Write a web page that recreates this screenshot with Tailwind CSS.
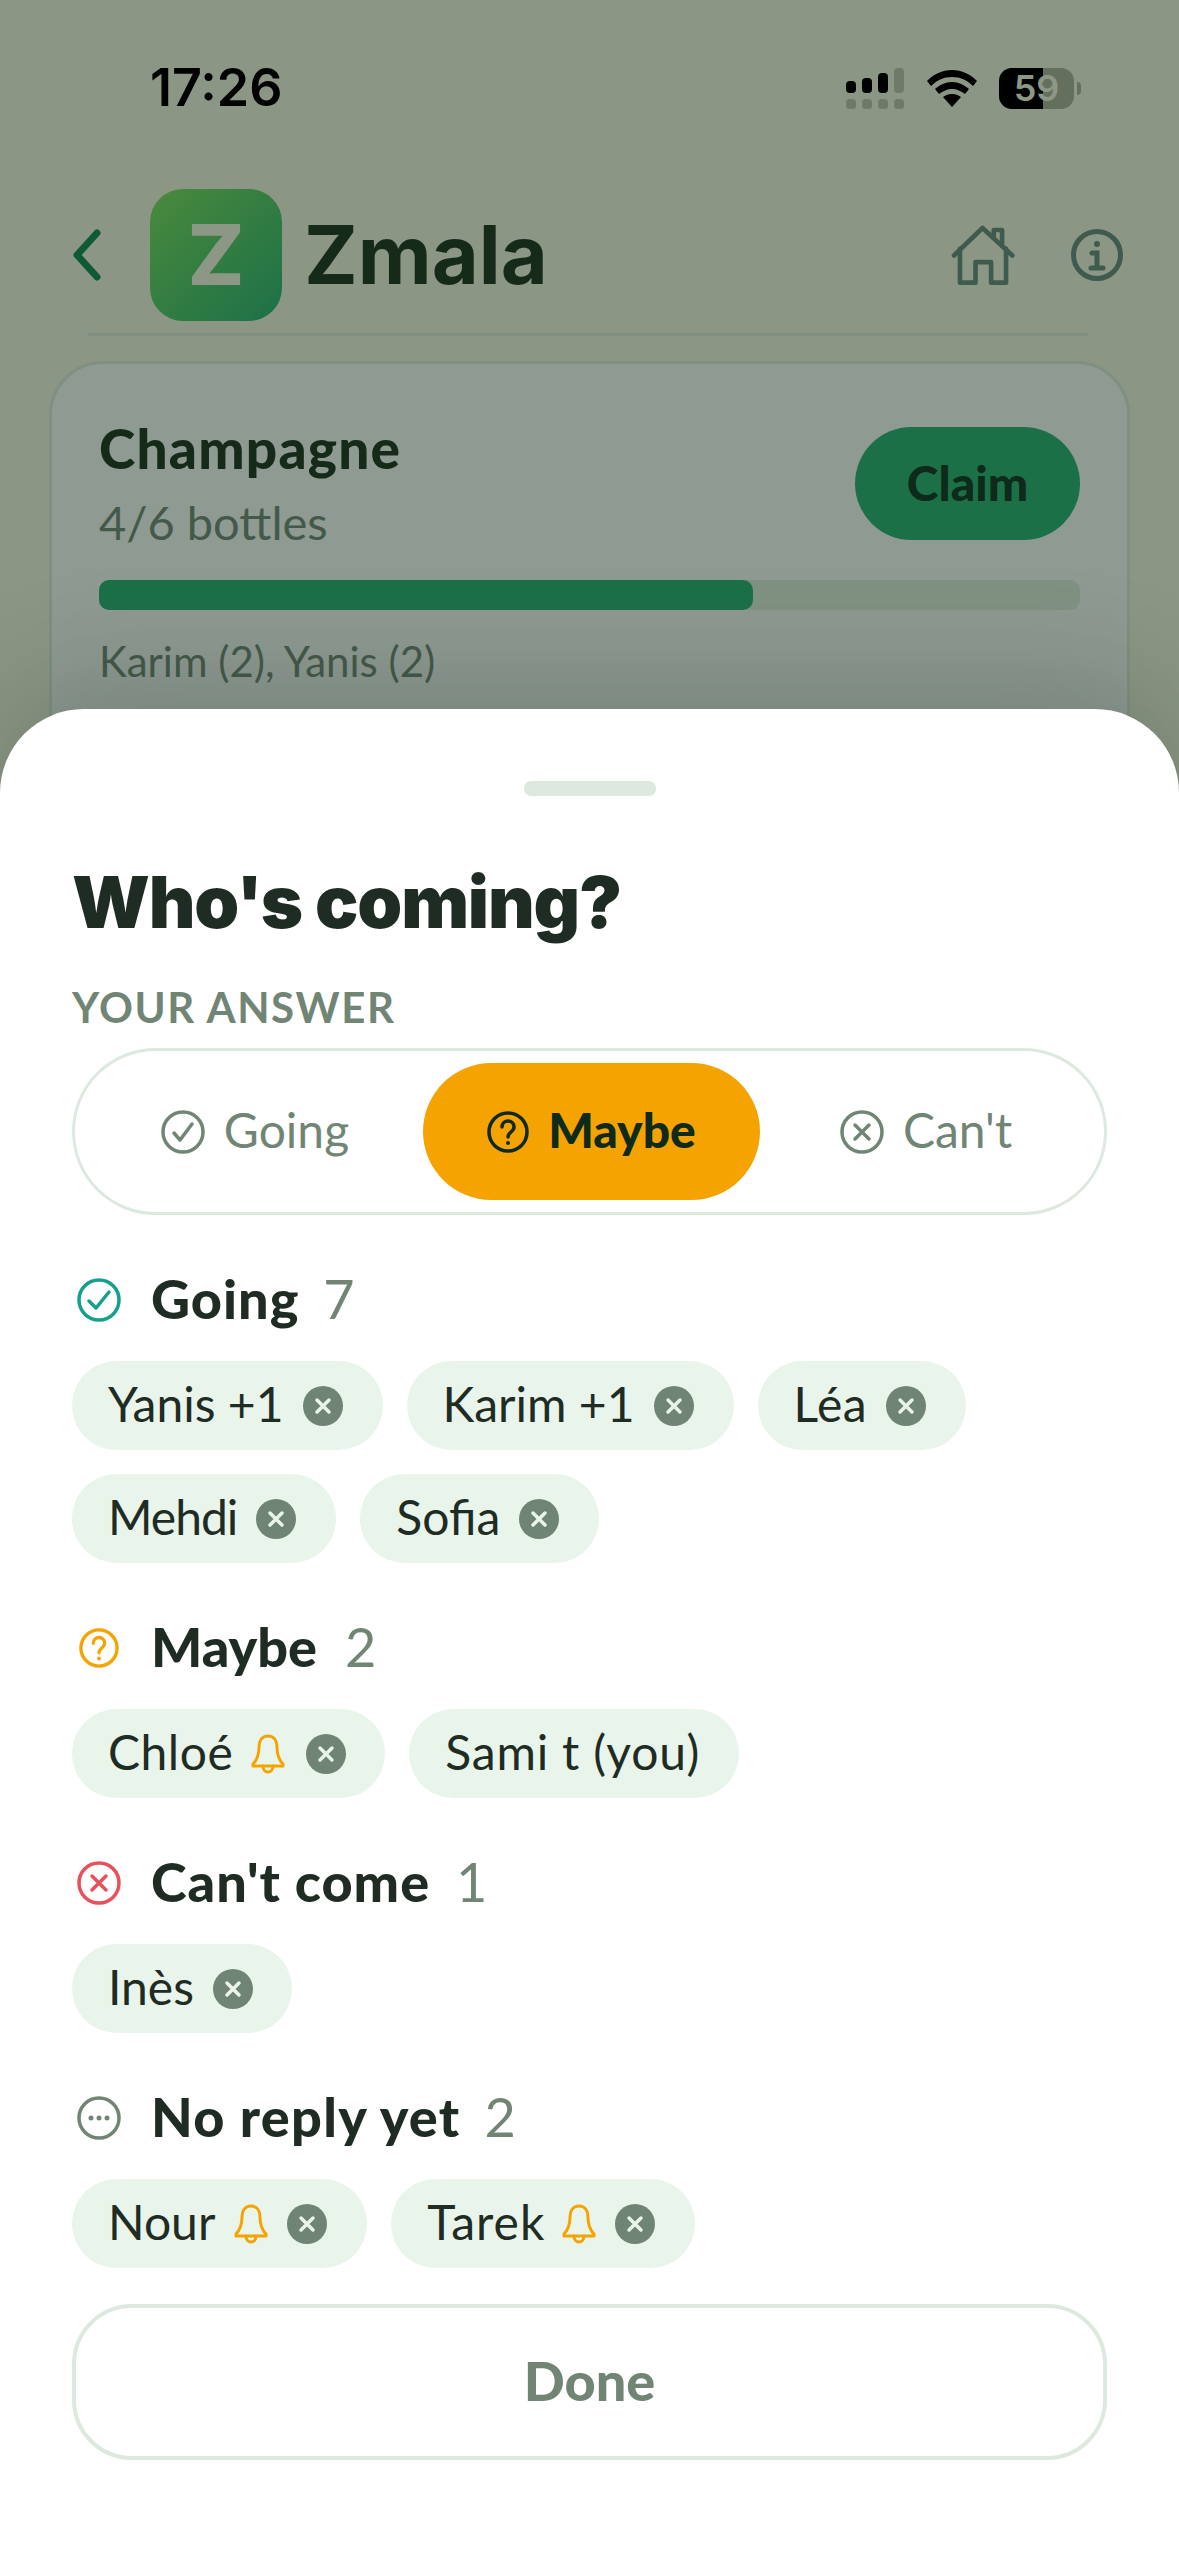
<!DOCTYPE html>
<html lang="en">
<head>
    <meta charset="UTF-8">
    <meta name="viewport" content="width=device-width, initial-scale=1.0">
    <title>Zmala</title>
    <script src="https://cdn.jsdelivr.net/npm/@tailwindcss/browser@4"></script>
</head>
<body class="bg-[#8c9684] font-['Lato',sans-serif]">
    <svg class="hidden">
        <symbol id="x-dot" viewBox="0 0 40 40">
            <circle cx="20" cy="20" r="20" fill="#708476"/>
            <path d="M14 14l12 12M26 14L14 26" stroke="#e9f4eb" stroke-width="3.5" stroke-linecap="round"/>
        </symbol>
        <symbol id="bell" viewBox="0 0 34 40" fill="none" stroke="#f5a300" stroke-width="3" stroke-linecap="round" stroke-linejoin="round">
            <path d="M17 2c-6 0-9 5-9 11 0 7-1 12-6 17v2h30v-2c-5-5-6-10-6-17 0-6-3-11-9-11z"/>
            <path d="M12 32c0 8 10 8 10 0"/>
        </symbol>
    </svg>

    <div class="relative w-[1179px] h-[2556px] overflow-hidden">
        <!-- status bar -->
        <div class="flex items-center h-[176px] pt-[64px] pb-[64px] pl-[150px]">
            <span class="font-['Inter',sans-serif] font-semibold text-[52px] leading-[48px] text-black">17:26</span>
            <div class="ml-auto flex items-center">
                <svg width="58" height="41" viewBox="0 0 58 41">
                    <rect x="0" y="13" width="10" height="12" rx="4" fill="#000"/>
                    <rect x="16" y="10" width="10" height="15" rx="4" fill="#000"/>
                    <rect x="32" y="5" width="10" height="20" rx="4" fill="#000"/>
                    <rect x="48" y="0" width="10" height="25" rx="4" fill="#6f7a68"/>
                    <rect x="0" y="31" width="10" height="10" rx="3.5" fill="#6f7a68"/>
                    <rect x="16" y="31" width="10" height="10" rx="3.5" fill="#6f7a68"/>
                    <rect x="32" y="31" width="10" height="10" rx="3.5" fill="#6f7a68"/>
                    <rect x="48" y="31" width="10" height="10" rx="3.5" fill="#6f7a68"/>
                </svg>
                <svg class="ml-[23px]" width="50" height="37" viewBox="0 0 50 37">
                    <path d="M25 0C15 0 7 4 0 11l4 5c6-6 13-9 21-9s15 3 21 9l4-5C43 4 35 0 25 0z" fill="#000"/>
                    <path d="M25 12c-7 0-12 3-17 7l4 5c4-3 8-5 13-5s9 2 13 5l4-5c-5-4-10-7-17-7z" fill="#000"/>
                    <path d="M25 24c-4 0-6 1-9 3l9 10 9-10c-3-2-5-3-9-3z" fill="#000"/>
                </svg>
                <div class="ml-[22px] relative w-[75px] h-[41px] rounded-[13px] overflow-hidden bg-[#646f5e]">
                    <div class="w-[44px] h-full bg-black"></div>
                    <span class="absolute inset-0 flex items-center justify-center font-['Inter',sans-serif] font-semibold text-[36px] leading-none text-[#8d9785]">59</span>
                </div>
                <div class="ml-[3px] mr-[98px] w-[4px] h-[13px] rounded-r-full bg-[#646f5e]"></div>
            </div>
        </div>

        <!-- app header -->
        <div class="flex items-center h-[132px] mt-[13px]">
            <svg class="ml-[73px]" width="28" height="52" viewBox="0 0 28 52" fill="none" stroke="#0f5a34" stroke-width="7" stroke-linecap="round" stroke-linejoin="round">
                <path d="M24 4L4 26l20 22"/>
            </svg>
            <div class="ml-[49px] flex items-center justify-center w-[132px] h-[132px] rounded-[33px] bg-[linear-gradient(135deg,#4a8a3c,#1c7048)] font-['Inter',sans-serif] font-extrabold text-[84px] leading-none text-[#8d9785]">Z</div>
            <span class="ml-[22px] font-['Inter',sans-serif] font-bold text-[81px] leading-none text-[#162a1a]">Zmala</span>
            <svg class="ml-auto" width="68" height="63" viewBox="450 550 205 190" fill="none" stroke="#3f5b4f" stroke-width="14" stroke-linecap="round" stroke-linejoin="round">
                <path d="M465 645l86-83 90 83"/>
                <path d="M483 625v102h47v-62h47v62h45V625"/>
                <path d="M585 590v-22h25v42"/>
            </svg>
            <svg class="ml-[54px] mr-[56px]" width="52" height="52" viewBox="0 0 52 52" fill="none" stroke="#3f5b4f" stroke-width="5" stroke-linecap="round">
                <circle cx="26" cy="26" r="23.5"/>
                <circle cx="26" cy="15" r="3" fill="#3f5b4f" stroke="none"/>
                <path d="M21 24h5v15M20 39h12"/>
            </svg>
        </div>
        <div class="h-[3px] mt-[12px] ml-[88px] mr-[90px] rounded-b-full bg-[#7e8f80]"></div>

        <!-- card behind the sheet -->
        <div class="mt-[25px] mx-[49px] h-[420px] rounded-[54px] border-[3px] border-[#7f9083] bg-[#8f9a92] pt-[49px] px-[47px]">
            <div class="flex justify-between">
                <div>
                    <div class="font-black text-[55px] leading-[70px] tracking-[1.2px] text-[#162a1a]">Champagne</div>
                    <div class="mt-[9px] text-[47px] leading-[60px] text-[#45594b]">4/6 bottles</div>
                </div>
                <div class="mt-[14px] pb-[2px] flex items-center justify-center w-[225px] h-[113px] rounded-full bg-[#1c7048] font-black text-[48px] text-[#0e2a1a]">Claim</div>
            </div>
            <div class="mt-[28px] h-[30px] rounded-[10px] bg-[#809283]">
                <div class="h-full rounded-[10px] bg-[#1c7048]" style="width:66.7%"></div>
            </div>
            <div class="mt-[23px] text-[42px] leading-[56px] text-[#45594b]">Karim (2), Yanis (2)</div>
        </div>

        <!-- bottom sheet -->
        <div class="absolute inset-x-0 bottom-0 h-[1847px] rounded-t-[84px] bg-white px-[72px] pt-[72px] shadow-[0_-20px_120px_rgba(20,40,25,0.22)]">
            <div class="mx-auto w-[132px] h-[15px] rounded-[7px] bg-[#dde9de]"></div>
            <h1 class="mt-[62px] font-['Inter',sans-serif] font-black text-[72px] leading-[88px] tracking-[-1.2px] text-[#1f2c23]">Who's coming?</h1>
            <div class="mt-[36px] font-bold text-[42px] leading-[50px] tracking-[1.6px] text-[#718575]">YOUR ANSWER</div>

            <div class="mt-[16px] grid grid-cols-[336px_337px_332px] w-[1035px] h-[167px] p-[12px] rounded-full border-[3px] border-[#dde9de]">
                <div class="flex items-center justify-center gap-[19px] text-[48px] text-[#718575]">
                    <svg width="44" height="44" viewBox="0 0 44 44" fill="none" stroke="#718575" stroke-width="3.5" stroke-linecap="round" stroke-linejoin="round">
                        <circle cx="22" cy="22" r="20"/><path d="M13 23l6 7 12-16"/>
                    </svg>
                    <span class="-mt-[3px]">Going</span>
                </div>
                <div class="flex items-center justify-center gap-[19px] rounded-full bg-[#f5a300] font-black text-[48px] text-[#0e2a1a]">
                    <svg width="42" height="42" viewBox="0 0 42 42" fill="none" stroke="#0e2a1a" stroke-width="3.5" stroke-linecap="round" stroke-linejoin="round">
                        <circle cx="21" cy="21" r="19"/><path d="M15 16c0-8 12-8 12 0 0 5-6 5-6 10"/><circle cx="21" cy="32" r="2" fill="#0e2a1a" stroke="none"/>
                    </svg>
                    <span class="-mt-[3px]">Maybe</span>
                </div>
                <div class="flex items-center justify-center gap-[19px] text-[48px] text-[#718575]">
                    <svg width="44" height="44" viewBox="0 0 44 44" fill="none" stroke="#718575" stroke-width="3.5" stroke-linecap="round">
                        <circle cx="22" cy="22" r="20"/><path d="M15 15l14 14M29 15L15 29"/>
                    </svg>
                    <span class="-mt-[3px]">Can't</span>
                </div>
            </div>

            <!-- going -->
            <div class="mt-[48px] flex items-center h-[74px]">
                <svg class="ml-[5px]" width="44" height="44" viewBox="0 0 44 44" fill="none" stroke="#14a08c" stroke-width="3.5" stroke-linecap="round" stroke-linejoin="round">
                    <circle cx="22" cy="22" r="20"/><path d="M12 23l7 7 13-16"/>
                </svg>
                <span class="ml-[30px] -mt-[3px] font-black text-[54px] tracking-[1px] text-[#1f2c23]">Going</span>
                <span class="ml-[24px] -mt-[3px] text-[54px] text-[#718575]">7</span>
            </div>
            <div class="mt-[24px] flex flex-wrap gap-[24px]">
                <div class="flex items-center h-[89px] pl-[36px] pr-[40px] rounded-full bg-[#e9f4eb] text-[48px] text-[#1f2c23]"><span class="-mt-[3px]">Yanis +1</span><svg class="ml-[19px]" width="40" height="40"><use href="#x-dot"/></svg></div>
                <div class="flex items-center h-[89px] pl-[36px] pr-[40px] rounded-full bg-[#e9f4eb] text-[48px] text-[#1f2c23]"><span class="-mt-[3px]">Karim +1</span><svg class="ml-[19px]" width="40" height="40"><use href="#x-dot"/></svg></div>
                <div class="flex items-center h-[89px] pl-[36px] pr-[40px] rounded-full bg-[#e9f4eb] text-[48px] tracking-[0.5px] text-[#1f2c23]"><span class="-mt-[3px]">Léa</span><svg class="ml-[19px]" width="40" height="40"><use href="#x-dot"/></svg></div>
                <div class="flex items-center h-[89px] pl-[36px] pr-[40px] rounded-full bg-[#e9f4eb] text-[48px] tracking-[-1px] text-[#1f2c23]"><span class="-mt-[3px]">Mehdi</span><svg class="ml-[19px]" width="40" height="40"><use href="#x-dot"/></svg></div>
                <div class="flex items-center h-[89px] pl-[36px] pr-[40px] rounded-full bg-[#e9f4eb] text-[48px] text-[#1f2c23]"><span class="-mt-[3px]">Sofia</span><svg class="ml-[19px]" width="40" height="40"><use href="#x-dot"/></svg></div>
            </div>

            <!-- maybe -->
            <div class="mt-[48px] flex items-center h-[74px]">
                <svg class="ml-[7px]" width="40" height="40" viewBox="0 0 42 42" fill="none" stroke="#f5a300" stroke-width="3.5" stroke-linecap="round" stroke-linejoin="round">
                    <circle cx="21" cy="21" r="19"/><path d="M15 16c0-8 12-8 12 0 0 5-6 5-6 10"/><circle cx="21" cy="32" r="2" fill="#f5a300" stroke="none"/>
                </svg>
                <span class="ml-[32px] -mt-[3px] font-black text-[54px] text-[#1f2c23]">Maybe</span>
                <span class="ml-[28px] -mt-[3px] text-[54px] text-[#718575]">2</span>
            </div>
            <div class="mt-[24px] flex flex-wrap gap-[24px]">
                <div class="flex items-center h-[89px] pl-[36px] pr-[39px] rounded-full bg-[#e9f4eb] text-[48px] tracking-[0.5px] text-[#1f2c23]"><span class="-mt-[3px]">Chloé</span><svg class="ml-[18px]" width="34" height="40"><use href="#bell"/></svg><svg class="ml-[21px]" width="40" height="40"><use href="#x-dot"/></svg></div>
                <div class="flex items-center h-[89px] pl-[36px] pr-[39px] rounded-full bg-[#e9f4eb] text-[48px] tracking-[0.8px] text-[#1f2c23]"><span class="-mt-[3px]">Sami t (you)</span></div>
            </div>

            <!-- cant come -->
            <div class="mt-[48px] flex items-center h-[74px]">
                <svg class="ml-[5px]" width="44" height="44" viewBox="0 0 44 44" fill="none" stroke="#e8505b" stroke-width="3.5" stroke-linecap="round">
                    <circle cx="22" cy="22" r="20"/><path d="M15 15l14 14M29 15L15 29"/>
                </svg>
                <span class="ml-[30px] -mt-[3px] font-black text-[54px] tracking-[1px] text-[#1f2c23]">Can't come</span>
                <span class="ml-[26px] -mt-[3px] text-[54px] text-[#718575]">1</span>
            </div>
            <div class="mt-[24px] flex flex-wrap gap-[24px]">
                <div class="flex items-center h-[89px] pl-[36px] pr-[39px] rounded-full bg-[#e9f4eb] text-[48px] text-[#1f2c23]"><span class="-mt-[3px]">Inès</span><svg class="ml-[19px]" width="40" height="40"><use href="#x-dot"/></svg></div>
            </div>

            <!-- no reply -->
            <div class="mt-[48px] flex items-center h-[74px]">
                <svg class="ml-[5px]" width="44" height="44" viewBox="0 0 44 44" fill="none" stroke="#718575" stroke-width="3.5">
                    <circle cx="22" cy="22" r="20"/>
                    <circle cx="14" cy="22" r="2.5" fill="#718575" stroke="none"/><circle cx="22" cy="22" r="2.5" fill="#718575" stroke="none"/><circle cx="30" cy="22" r="2.5" fill="#718575" stroke="none"/>
                </svg>
                <span class="ml-[30px] -mt-[3px] font-black text-[54px] tracking-[1.3px] text-[#1f2c23]">No reply yet</span>
                <span class="ml-[24px] -mt-[3px] text-[54px] text-[#718575]">2</span>
            </div>
            <div class="mt-[24px] flex flex-wrap gap-[24px]">
                <div class="flex items-center h-[89px] pl-[36px] pr-[40px] rounded-full bg-[#e9f4eb] text-[48px] text-[#1f2c23]"><span class="-mt-[3px]">Nour</span><svg class="ml-[19px]" width="34" height="40"><use href="#bell"/></svg><svg class="ml-[19px]" width="40" height="40"><use href="#x-dot"/></svg></div>
                <div class="flex items-center h-[89px] pl-[36px] pr-[40px] rounded-full bg-[#e9f4eb] text-[48px] tracking-[1px] text-[#1f2c23]"><span class="-mt-[3px]">Tarek</span><svg class="ml-[17px]" width="34" height="40"><use href="#bell"/></svg><svg class="ml-[19px]" width="40" height="40"><use href="#x-dot"/></svg></div>
            </div>

            <div class="mt-[36px] flex items-center justify-center w-[1035px] h-[156px] rounded-[60px] border-[4px] border-[#dde9de] font-black text-[54px] text-[#718575]"><span class="-mt-[3px]">Done</span></div>
        </div>
    </div>
</body>
</html>
